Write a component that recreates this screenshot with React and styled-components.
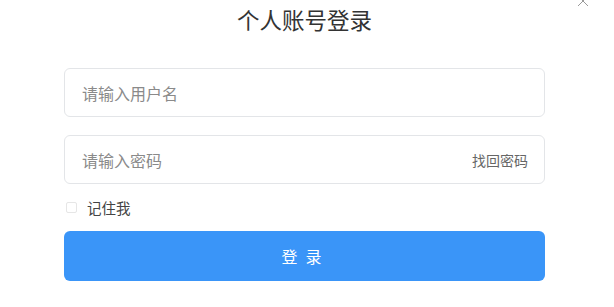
import React from "react";
import styled, { createGlobalStyle } from "styled-components";

const Global = createGlobalStyle`
  html, body { margin: 0; padding: 0; background: #fff; }
  body { font-family: "Noto Sans CJK SC", "Noto Sans", sans-serif; }
  * { box-sizing: border-box; }
`;

const Dialog = styled.div`
  position: relative;
  width: 614px;
  height: 307px;
  background: #fff;
  overflow: hidden;
`;

const Close = styled.button`
  position: absolute;
  top: -5px;
  right: 25px;
  width: 12px;
  height: 12px;
  padding: 0;
  border: none;
  background: none;
  color: #9a9a9a;
  display: flex;
  align-items: center;
  justify-content: center;
`;

const Title = styled.h2`
  margin: 0;
  padding: 4px 0 0 0;
  text-align: center;
  width: 609px;
  font-size: 22.5px;
  line-height: 30px;
  font-weight: 400;
  color: #333;
`;

const Form = styled.form`
  margin: 0 0 0 64px;
  width: 481px;
  padding-top: 34px;
  display: flex;
  flex-direction: column;
`;

const Field = styled.div`
  height: 49px;
  border: 1px solid #e3e5e8;
  border-radius: 6px;
  display: flex;
  align-items: center;
  padding: 0 16px 0 17px;
  margin-bottom: ${(p) => p.$mb || 0}px;
`;

const Input = styled.input`
  flex: 1;
  border: none;
  outline: none;
  background: transparent;
  font-family: inherit;
  font-size: 16px;
  color: #333;
  padding: 0;
  &::placeholder { color: #8a8a8a; }
`;

const Link = styled.span`
  font-size: 14px;
  color: #666;
`;

const Remember = styled.label`
  display: flex;
  align-items: center;
  height: 20px;
  margin-top: 13px;
  font-size: 14.5px;
  color: #444;
`;

const Box = styled.span`
  width: 11px;
  height: 11px;
  border: 1px solid #e6e6e6;
  border-radius: 2px;
  margin: 0 10px 0 2px;
`;

const Submit = styled.button`
  margin-top: 14px;
  height: 50px;
  border: none;
  border-radius: 6px;
  background: #3a95f8;
  color: #fff;
  font-family: inherit;
  font-size: 16px;
  letter-spacing: 8px;
  text-indent: 2px;
`;

export default function App() {
  return (
    <>
      <Global />
      <Dialog>
        <Close aria-label="close">
          <svg width="12" height="12" viewBox="0 0 12 12">
            <path d="M1 1L11 11M11 1L1 11" stroke="currentColor" strokeWidth="1" />
          </svg>
        </Close>
        <Title>个人账号登录</Title>
        <Form onSubmit={(e) => e.preventDefault()}>
          <Field $mb={18}>
            <Input placeholder="请输入用户名" />
          </Field>
          <Field>
            <Input type="password" placeholder="请输入密码" />
            <Link>找回密码</Link>
          </Field>
          <Remember>
            <Box />
            记住我
          </Remember>
          <Submit type="submit">登录</Submit>
        </Form>
      </Dialog>
    </>
  );
}
